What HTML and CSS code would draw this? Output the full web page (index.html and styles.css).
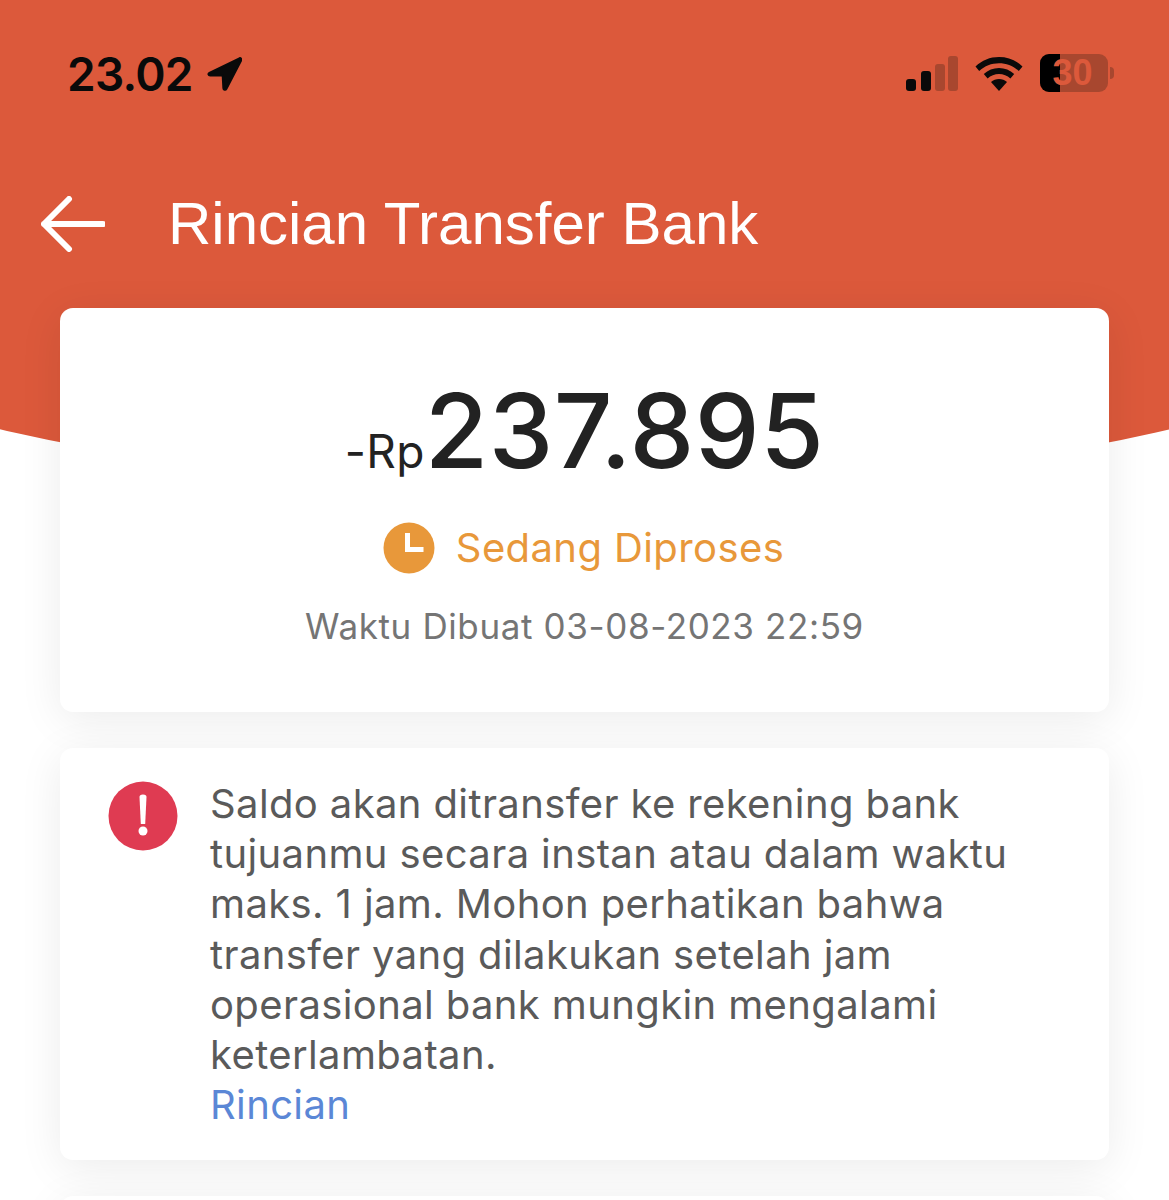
FILE: index.html
```html
<!DOCTYPE html>
<html lang="id">
<head>
<meta charset="utf-8">
<title>Rincian Transfer Bank</title>
<link rel="stylesheet" href="styles.css">
</head>
<body>
<div class="page">
  <header class="header">
    <div class="status">
      <div class="status-left">
        <span class="time">23.02</span>
        <svg class="loc" width="36" height="36" viewBox="0 0 36 36"><path d="M33.500 2.500 3.500 17.200c-1.300.7-.9 2 .6 2l11.400.1c.9 0 1.400.5 1.500 1.400l.6 11.500c.1 1.500 1.900 1.900 2.500.6L35 4.200c.5-1.200-.4-2.200-1.500-1.700Z"/></svg>
      </div>
      <div class="status-right">
        <svg class="signal" width="52" height="36" viewBox="0 0 52 36"><rect x="0" y="23" width="10" height="12" rx="3"/><rect x="15" y="15" width="10" height="20" rx="3"/><rect class="dim" x="29" y="8" width="10" height="27" rx="3"/><rect class="dim" x="42" y="0" width="10" height="35" rx="3"/></svg>
        <svg class="wifi" width="50" height="36" viewBox="0 0 50 36"><path d="M25 1c9 0 17 3.300 23.500 9.500L44.800 15C39.400 10 32.500 7.300 25 7.300S10.600 10 5.200 15L1.500 10.500C8 4.300 16 1 25 1Z"/><path d="M25 12c5.800 0 11 2.100 15.200 6l-3.800 4.400C33.300 19.600 29.300 18 25 18s-8.300 1.600-11.400 4.400L9.800 18C14 14.100 19.200 12 25 12Z"/><path d="M25 23c3 0 5.800 1 8 3L25 35l-8-9c2.200-2 5-3 8-3Z"/></svg>
        <div class="battery">
          <div class="battery-body"><div class="battery-fill"></div><span class="battery-text">30</span></div>
          <div class="battery-cap"></div>
        </div>
      </div>
    </div>
    <div class="titlebar">
      <svg class="back" width="64" height="56" viewBox="0 0 64 56"><path d="M28 3 3 28l25 25M3 28h59"/></svg>
      <h1 class="title">Rincian Transfer Bank</h1>
    </div>
  </header>

  <main class="cards">
    <section class="card card-amount">
      <div class="amount"><span class="currency">-Rp</span><span class="value">237.895</span></div>
      <div class="state">
        <svg class="clock" width="52" height="52" viewBox="0 0 52 52"><circle cx="26" cy="26" r="25.500"/><path d="M24.500 11v16.500h16"/></svg>
        <span class="state-text">Sedang Diproses</span>
      </div>
      <div class="created">Waktu Dibuat 03-08-2023 22:59</div>
    </section>

    <section class="card card-note">
      <svg class="alert" width="70" height="70" viewBox="0 0 70 70"><circle cx="35" cy="35" r="34.500"/><path class="alert-bar" d="M31.500 16c0-1.500 1-2.500 3.500-2.500s3.500 1 3.500 2.500L37.200 43h-4.400Z"/><circle class="alert-dot" cx="35" cy="50" r="4.500"/></svg>
      <div class="note">
        <p class="note-text">Saldo akan ditransfer ke rekening bank tujuanmu secara instan atau dalam waktu maks. 1 jam. Mohon perhatikan bahwa transfer yang dilakukan setelah jam operasional bank mungkin mengalami keterlambatan.</p>
        <a class="link" href="#">Rincian</a>
      </div>
    </section>

    <section class="card card-next"></section>
  </main>
</div>
</body>
</html>
```
FILE: styles.css
```css
* { box-sizing: border-box; }
html, body { margin: 0; padding: 0; background: #fff; }
body { font-family: Inter, "Liberation Sans", Arial, sans-serif; }
.page { position: relative; width: 1169px; height: 1200px; overflow: hidden; background: #fff; }

.header { position: relative; height: 308px; color: #fff; }
.header::before {
  content: "";
  position: absolute;
  left: -315.5px;
  top: -1000px;
  width: 1800px;
  height: 1489px;
  background: #dc593b;
  border-radius: 0 0 900px 900px / 0 0 249px 249px;
}
.status { position: relative; display: flex; justify-content: space-between; align-items: center; padding: 52px 55px 0 67px; height: 96px; color: #000; }
.status-left { display: flex; align-items: center; gap: 13px; }
.time { font-size: 46px; font-weight: 600; line-height: 44px; letter-spacing: -.7px; color: #0a0a0a; }
.loc { fill: #0a0a0a; stroke: #0a0a0a; stroke-width: 2.500; stroke-linejoin: round; }
.status-right { display: flex; align-items: center; }
.signal { fill: #0a0a0a; margin-right: 16px; }
.signal .dim { fill: #a8472f; }
.wifi { fill: #0a0a0a; margin-right: 16px; }
.battery { display: flex; align-items: center; gap: 2px; margin-top: -2px; }
.battery-body { position: relative; width: 68px; height: 38px; border-radius: 9px; background: #a8472f; }
.battery-fill { width: 20px; height: 100%; background: #000; border-radius: 9px 0 0 9px; }
.battery-text { position: absolute; inset: 0; display: flex; align-items: center; justify-content: center; padding-right: 3px; font: 700 36px/38px "Liberation Sans", Arial, sans-serif; color: #dc593b; }
.battery-cap { width: 4px; height: 12px; background: #a8472f; border-radius: 0 6px 6px 0; }

.titlebar { position: relative; display: flex; align-items: center; padding: 93px 0 0 41px; gap: 63px; }
.back { fill: none; stroke: #fff; stroke-width: 6; stroke-linecap: round; stroke-linejoin: round; }
.title { margin: 0; font: 400 60px/70px "Liberation Sans", Arial, sans-serif; color: #fff; }

.cards { position: relative; display: flex; flex-direction: column; gap: 36px; padding: 0 60px; }
.card { background: #fff; border-radius: 13px; box-shadow: 0 8px 44px rgba(0,0,0,.08); }

.card-amount { height: 404px; display: flex; flex-direction: column; align-items: center; padding-top: 61px; }
.amount { display: flex; align-items: baseline; color: #222; height: 125px; }
.currency { font: 400 46px/1 Inter, "Liberation Sans", Arial, sans-serif; letter-spacing: .4px; }
.value { font: 500 103px/124px Inter, "Liberation Sans", sans-serif; letter-spacing: .5px; }
.state { display: flex; align-items: center; gap: 21px; margin: 28px 2px 0 0; }
.clock circle { fill: #e8983a; }
.clock path { fill: none; stroke: #fff; stroke-width: 5; }
.state-text { font-size: 40px; line-height: 52px; letter-spacing: .4px; color: #e8983a; }
.created { margin-top: 30px; font-size: 35px; line-height: 44px; letter-spacing: .62px; color: #757575; }

.card-note { height: 412px; display: flex; align-items: flex-start; padding: 33px 48px 0; gap: 32px; }
.alert { flex: none; }
.alert > circle:first-child { fill: #df3b52; }
.alert-bar { fill: #fff; }
.alert-dot { fill: #fff; }
.note { width: 840px; margin-top: -2px; }
.note-text { margin: 0; font-size: 40px; line-height: 50.200px; letter-spacing: .38px; color: #5a5a5a; }
.link { display: block; font-size: 40px; line-height: 50.200px; letter-spacing: .36px; color: #5b87d6; text-decoration: none; }

.card-next { height: 200px; }
```
